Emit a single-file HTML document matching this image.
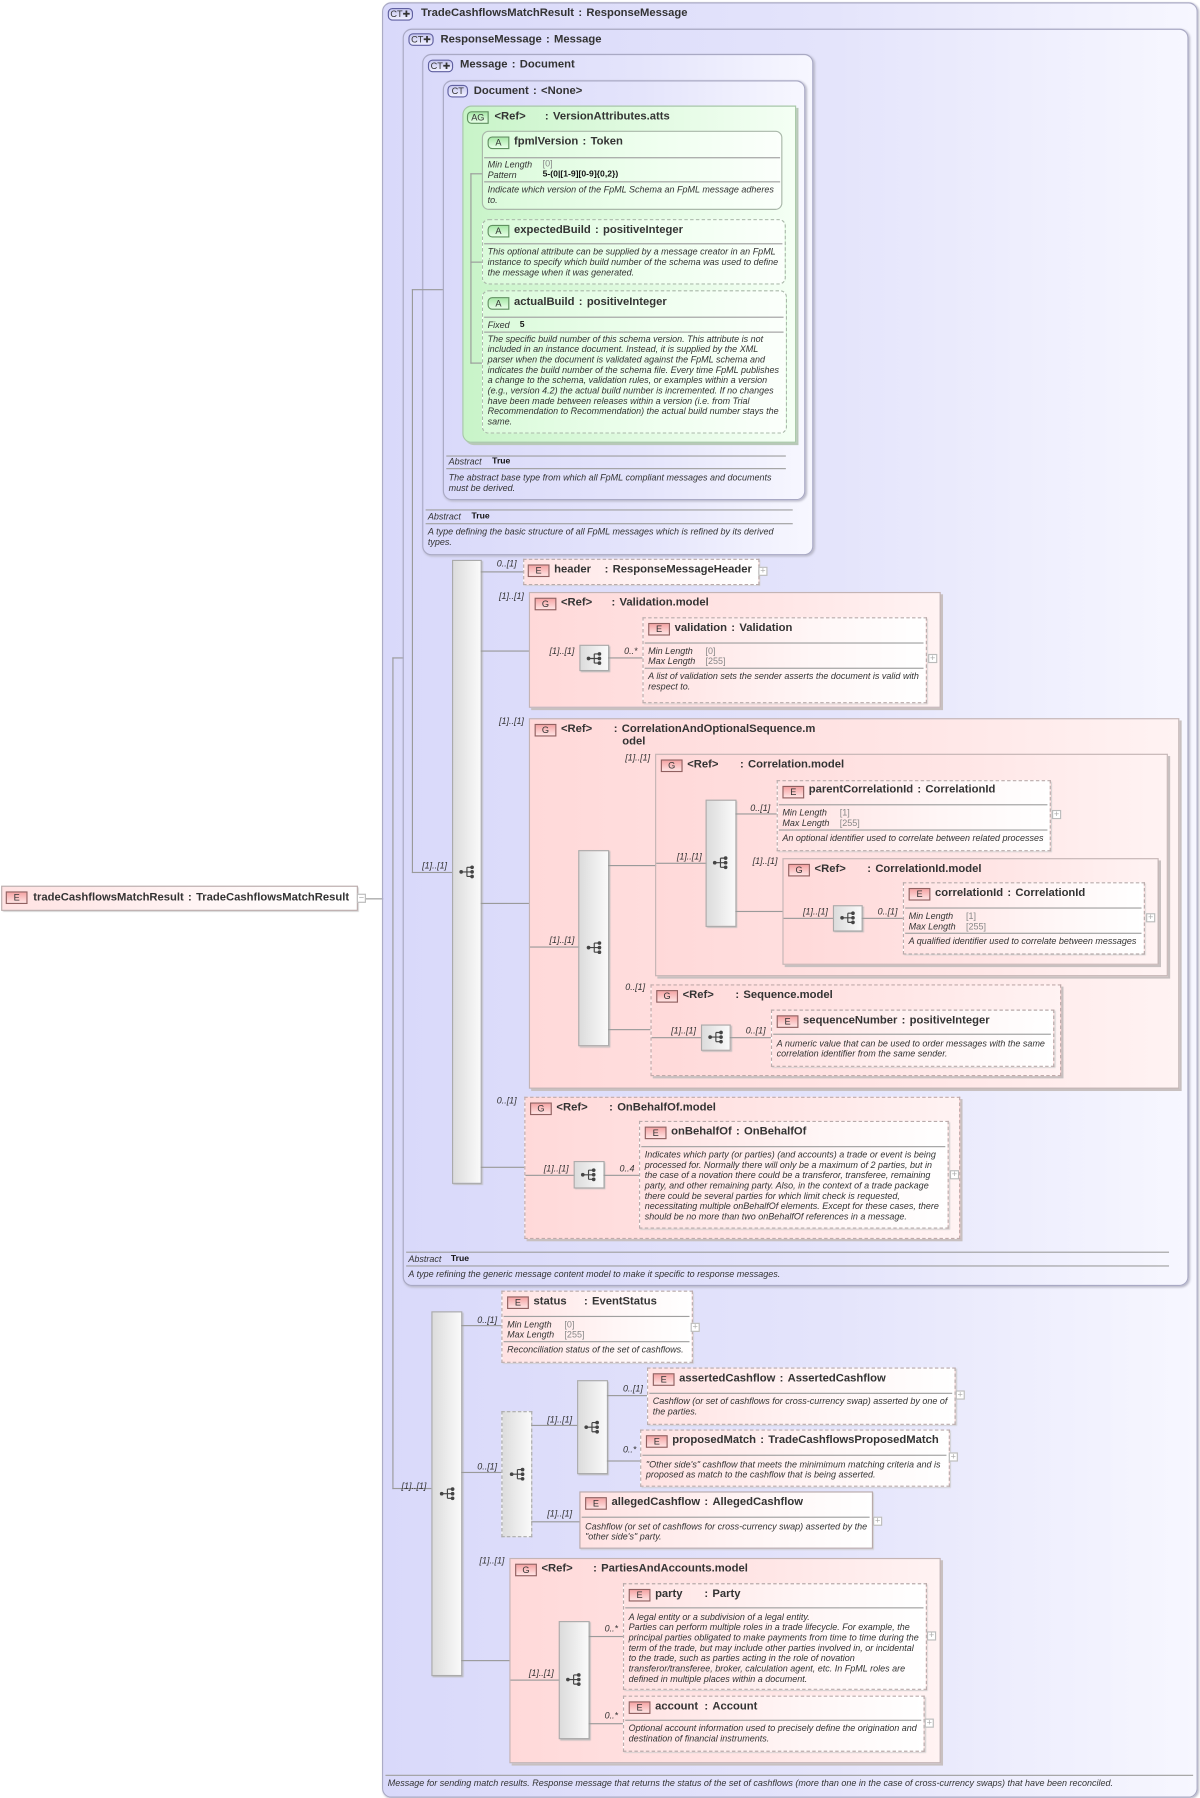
<!DOCTYPE html>
<html><head><meta charset="utf-8">
<style>
html,body{margin:0;padding:0;background:#fff;width:1200px;height:1798px;overflow:hidden}
#w{position:absolute;left:0;top:0;width:1046px;height:1567px;transform:scale(1.14723);transform-origin:0 0;font-family:"Liberation Sans",sans-serif;color:#333}
#w div{position:absolute;box-sizing:border-box}
.ct{border:1px solid #a9a9c4;border-radius:8px;background:linear-gradient(to right,#d9d9fa 0%,#e4e4fb 55%,#f7f7ff 100%);box-shadow:1px 1px 2px #b8b8c8}
.g{border:1px solid #c4b4b4;background:linear-gradient(to right,#ffd9d9,#ffe6e6 60%,#fff3f3);box-shadow:2px 2px 0 #c8c0c0}
.gd{border:1px dashed #c0aaaa;background:linear-gradient(to right,#ffd9d9,#ffe6e6 60%,#fff3f3);box-shadow:2px 2px 0 #c8c0c0}
.e{border:1px dashed #b9aaaa;background:linear-gradient(to right,#ffe2e2,#fff6f6 60%,#fff);box-shadow:1px 1px 1px #ccc}
.es{border:1px solid #b9aaaa;background:linear-gradient(to right,#ffe2e2,#fff6f6 60%,#fff);box-shadow:1px 1px 1px #ccc}
.ag{border:1px solid #a8c8a8;border-radius:8px 0 0 8px;background:linear-gradient(to right,#c8f4c8,#e4fbe4 60%,#f4fff4);box-shadow:2px 2px 0 #b8c8b8}
.a{border:1px solid #aab8aa;border-radius:6px;background:linear-gradient(to right,#dafada,#f0fff0 60%,#fbfffb)}
.ad{border:1px dashed #aab8aa;border-radius:6px;background:linear-gradient(to right,#dafada,#f0fff0 60%,#fbfffb)}
.t{font-size:9.8px;font-weight:bold;line-height:11px;white-space:nowrap;color:#333;word-spacing:1px}
.bd{font-size:8px;line-height:9px;text-align:center;font-weight:normal;border:1px solid #906060;background:linear-gradient(#f5a4a4,#ffe4e4);color:#333;width:19px;height:11px;word-spacing:0}
.bg{border:1px solid #609060;background:linear-gradient(#a8e8a8,#e8ffe8);border-radius:4px 0 0 4px}
.bc{border:1px solid #6060a0;background:linear-gradient(#c8c8f0,#f0f0ff);border-radius:4px;width:22px}
.s{font-size:7.85px;font-style:italic;line-height:9px;white-space:nowrap;color:#333}
.v{font-size:7.85px;line-height:9px;white-space:nowrap;color:#888}
.vb{font-size:7.5px;line-height:9px;white-space:nowrap;color:#111;font-weight:bold}
.l{font-size:7.8px;font-style:italic;white-space:nowrap;color:#333;line-height:8px}
.h{height:1px;background:#9a9a9a}
.vl{width:1px;background:#9a9a9a}
.sep{height:1px;background:#a0a0a0}
.sq{border:1px solid #aaa;background:linear-gradient(to right,#dcdcdc,#fafafa);box-shadow:1px 1px 1px #bbb}
.sqd{border:1px dashed #aaa;background:linear-gradient(to right,#dcdcdc,#fafafa)}
.pl{width:8px;height:8px;border:1px solid #bbb;background:#fff;font-size:8px;line-height:6px;text-align:center;color:#aaa}
</style></head><body>
<div id="w">
<svg width="0" height="0" style="position:absolute"><defs><g id="ic"><circle cx="2" cy="6" r="1.6" fill="#444"/><path d="M2 6H7M7 2V10M7 2H11M7 6H11M7 10H11" stroke="#444" stroke-width="1" fill="none"/><circle cx="11.5" cy="2" r="1.6" fill="#444"/><circle cx="11.5" cy="6" r="1.6" fill="#444"/><circle cx="11.5" cy="10" r="1.6" fill="#444"/></g></defs></svg>

<!-- left element -->
<div class="es" style="left:1px;top:772px;width:311px;height:22px"></div>
<div class="bd" style="left:5px;top:777px">E</div>
<div class="t" style="left:29px;top:777px">tradeCashflowsMatchResult&nbsp;:&nbsp;TradeCashflowsMatchResult</div>
<div class="pl" style="left:311px;top:779px">−</div>
<div class="h" style="left:319px;top:783px;width:24px"></div>

<!-- CT1 -->
<div class="ct" style="left:333px;top:2px;width:711px;height:1565px"></div>
<div class="bd bc" style="left:338px;top:7px">CT✚</div>
<div class="t" style="left:367px;top:6px">TradeCashflowsMatchResult&nbsp;:&nbsp;ResponseMessage</div>
<div class="sep" style="left:336px;top:1547px;width:704px"></div>
<div class="s" style="left:338px;top:1550px">Message for sending match results. Response message that returns the status of the set of cashflows (more than one in the case of cross-currency swaps) that have been reconciled.</div>

<div class="vl" style="left:342px;top:573px;height:725px"></div>
<div class="h" style="left:342px;top:573px;width:10px"></div>
<div class="h" style="left:342px;top:1297px;width:34px"></div>
<div class="l" style="left:350px;top:1292px">[1]..[1]</div>

<!-- CT2 -->
<div class="ct" style="left:351px;top:25px;width:685px;height:1096px"></div>
<div class="bd bc" style="left:356px;top:29px">CT✚</div>
<div class="t" style="left:384px;top:29px">ResponseMessage&nbsp;:&nbsp;Message</div>
<div class="vl" style="left:359px;top:252px;height:509px"></div>
<div class="h" style="left:359px;top:760px;width:35px"></div>
<div class="l" style="left:368px;top:751px">[1]..[1]</div>
<div class="sep" style="left:354px;top:1091px;width:665px"></div>
<div class="s" style="left:356px;top:1093px">Abstract</div>
<div class="vb" style="left:393px;top:1092px">True</div>
<div class="sep" style="left:354px;top:1103px;width:665px"></div>
<div class="s" style="left:356px;top:1106px">A type refining the generic message content model to make it specific to response messages.</div>

<!-- CT3 -->
<div class="ct" style="left:368px;top:47px;width:341px;height:437px"></div>
<div class="bd bc" style="left:373px;top:52px">CT✚</div>
<div class="t" style="left:401px;top:51px">Message&nbsp;:&nbsp;Document</div>
<div class="h" style="left:359px;top:252px;width:50px"></div>
<div class="sep" style="left:371px;top:444px;width:320px"></div>
<div class="s" style="left:373px;top:446px">Abstract</div>
<div class="vb" style="left:411px;top:445px">True</div>
<div class="sep" style="left:371px;top:456px;width:320px"></div>
<div class="s" style="left:373px;top:459px">A type defining the basic structure of all FpML messages which is refined by its derived<br>types.</div>

<!-- CT4 -->
<div class="ct" style="left:386px;top:70px;width:316px;height:366px"></div>
<div class="bd" style="left:390px;top:74px;width:18px;border:1px solid #6060a0;background:linear-gradient(#c8c8f0,#f0f0ff);border-radius:4px">CT</div>
<div class="t" style="left:413px;top:74px">Document&nbsp;:&nbsp;&lt;None&gt;</div>
<div class="sep" style="left:389px;top:397px;width:296px"></div>
<div class="s" style="left:391px;top:398px">Abstract</div>
<div class="vb" style="left:429px;top:397px">True</div>
<div class="sep" style="left:389px;top:408px;width:296px"></div>
<div class="s" style="left:391px;top:412px">The abstract base type from which all FpML compliant messages and documents<br>must be derived.</div>

<!-- AG -->
<div class="ag" style="left:403px;top:92px;width:291px;height:294px"></div>
<div class="bd bg" style="left:407px;top:97px">AG</div>
<div class="t" style="left:431px;top:96px">&lt;Ref&gt;</div>
<div class="t" style="left:475px;top:96px">:&nbsp;VersionAttributes.atts</div>
<div class="vl" style="left:410px;top:151px;height:166px"></div>
<div class="h" style="left:410px;top:151px;width:11px"></div>
<div class="h" style="left:410px;top:228px;width:11px"></div>
<div class="h" style="left:410px;top:316px;width:11px"></div>

<div class="a" style="left:420px;top:114px;width:262px;height:69px"></div>
<div class="bd bg" style="left:425px;top:119px">A</div>
<div class="t" style="left:448px;top:118px">fpmlVersion&nbsp;:&nbsp;Token</div>
<div class="sep" style="left:422px;top:137px;width:258px"></div>
<div class="s" style="left:425px;top:139px">Min Length<br>Pattern</div>
<div class="v" style="left:473px;top:138px">[0]</div>
<div class="vb" style="left:473px;top:147px">5-(0|[1-9][0-9]{0,2})</div>
<div class="sep" style="left:422px;top:158px;width:258px"></div>
<div class="s" style="left:425px;top:161px">Indicate which version of the FpML Schema an FpML message adheres<br>to.</div>

<div class="ad" style="left:420px;top:191px;width:265px;height:57px"></div>
<div class="bd bg" style="left:425px;top:196px">A</div>
<div class="t" style="left:448px;top:195px">expectedBuild&nbsp;:&nbsp;positiveInteger</div>
<div class="sep" style="left:422px;top:212px;width:260px"></div>
<div class="s" style="left:425px;top:215px">This optional attribute can be supplied by a message creator in an FpML<br>instance to specify which build number of the schema was used to define<br>the message when it was generated.</div>

<div class="ad" style="left:420px;top:253px;width:266px;height:125px"></div>
<div class="bd bg" style="left:425px;top:259px">A</div>
<div class="t" style="left:448px;top:258px">actualBuild&nbsp;:&nbsp;positiveInteger</div>
<div class="sep" style="left:422px;top:276px;width:261px"></div>
<div class="s" style="left:425px;top:279px">Fixed</div>
<div class="vb" style="left:453px;top:278px">5</div>
<div class="sep" style="left:422px;top:289px;width:261px"></div>
<div class="s" style="left:425px;top:291px">The specific build number of this schema version. This attribute is not<br>included in an instance document. Instead, it is supplied by the XML<br>parser when the document is validated against the FpML schema and<br>indicates the build number of the schema file. Every time FpML publishes<br>a change to the schema, validation rules, or examples within a version<br>(e.g., version 4.2) the actual build number is incremented. If no changes<br>have been made between releases within a version (i.e. from Trial<br>Recommendation to Recommendation) the actual build number stays the<br>same.</div>

<!-- Main sequence bar -->
<div class="sq" style="left:394px;top:488px;width:26px;height:544px"></div>
<svg style="position:absolute;left:400px;top:754px" width="14" height="12"><use href="#ic"/></svg>

<!-- header -->
<div class="h" style="left:419px;top:498px;width:38px"></div>
<div class="l" style="left:433px;top:488px">0..[1]</div>
<div class="e" style="left:456px;top:487px;width:206px;height:23px"></div>
<div class="bd" style="left:460px;top:492px">E</div>
<div class="t" style="left:483px;top:491px">header</div>
<div class="t" style="left:527px;top:491px">:&nbsp;ResponseMessageHeader</div>
<div class="pl" style="left:661px;top:494px">+</div>

<!-- Validation.model -->
<div class="h" style="left:419px;top:567px;width:86px"></div>
<div class="l" style="left:435px;top:516px">[1]..[1]</div>
<div class="g" style="left:461px;top:516px;width:359px;height:101px"></div>
<div class="bd" style="left:466px;top:521px">G</div>
<div class="t" style="left:489px;top:520px">&lt;Ref&gt;</div>
<div class="t" style="left:533px;top:520px">:&nbsp;Validation.model</div>
<div class="l" style="left:479px;top:564px">[1]..[1]</div>
<div class="sq" style="left:505px;top:562px;width:26px;height:23px"></div>
<svg style="position:absolute;left:511px;top:568px" width="14" height="12"><use href="#ic"/></svg>
<div class="h" style="left:530px;top:573px;width:31px"></div>
<div class="l" style="left:544px;top:564px">0..*</div>
<div class="e" style="left:560px;top:538px;width:248px;height:75px"></div>
<div class="bd" style="left:565px;top:543px">E</div>
<div class="t" style="left:588px;top:542px">validation&nbsp;:&nbsp;Validation</div>
<div class="sep" style="left:562px;top:560px;width:243px"></div>
<div class="s" style="left:565px;top:563px">Min Length<br>Max Length</div>
<div class="v" style="left:615px;top:563px">[0]<br>[255]</div>
<div class="sep" style="left:562px;top:582px;width:243px"></div>
<div class="s" style="left:565px;top:585px">A list of validation sets the sender asserts the document is valid with<br>respect to.</div>
<div class="pl" style="left:809px;top:570px">+</div>

<!-- CorrelationAndOptionalSequence.model -->
<div class="h" style="left:419px;top:787px;width:43px"></div>
<div class="l" style="left:435px;top:625px">[1]..[1]</div>
<div class="g" style="left:461px;top:626px;width:567px;height:323px"></div>
<div class="bd" style="left:466px;top:631px">G</div>
<div class="t" style="left:489px;top:630px">&lt;Ref&gt;</div>
<div class="t" style="left:535px;top:630px">:&nbsp;CorrelationAndOptionalSequence.m<br>&nbsp;&nbsp;odel</div>
<div class="h" style="left:462px;top:825px;width:43px"></div>
<div class="l" style="left:479px;top:816px">[1]..[1]</div>
<div class="sq" style="left:504px;top:741px;width:27px;height:171px"></div>
<svg style="position:absolute;left:511px;top:820px" width="14" height="12"><use href="#ic"/></svg>
<div class="h" style="left:530px;top:754px;width:42px"></div>
<div class="h" style="left:530px;top:897px;width:38px"></div>

<!-- Correlation.model -->
<div class="l" style="left:545px;top:657px">[1]..[1]</div>
<div class="g" style="left:571px;top:657px;width:447px;height:194px"></div>
<div class="bd" style="left:576px;top:662px">G</div>
<div class="t" style="left:599px;top:661px">&lt;Ref&gt;</div>
<div class="t" style="left:645px;top:661px">:&nbsp;Correlation.model</div>
<div class="h" style="left:572px;top:752px;width:44px"></div>
<div class="l" style="left:590px;top:743px">[1]..[1]</div>
<div class="sq" style="left:615px;top:697px;width:27px;height:111px"></div>
<svg style="position:absolute;left:621px;top:746px" width="14" height="12"><use href="#ic"/></svg>
<div class="h" style="left:641px;top:709px;width:37px"></div>
<div class="l" style="left:654px;top:701px">0..[1]</div>
<div class="e" style="left:677px;top:680px;width:239px;height:62px"></div>
<div class="bd" style="left:682px;top:685px">E</div>
<div class="t" style="left:705px;top:683px">parentCorrelationId&nbsp;:&nbsp;CorrelationId</div>
<div class="sep" style="left:679px;top:701px;width:234px"></div>
<div class="s" style="left:682px;top:704px">Min Length<br>Max Length</div>
<div class="v" style="left:732px;top:704px">[1]<br>[255]</div>
<div class="sep" style="left:679px;top:723px;width:234px"></div>
<div class="s" style="left:682px;top:726px">An optional identifier used to correlate between related processes</div>
<div class="pl" style="left:917px;top:706px">+</div>

<div class="h" style="left:641px;top:794px;width:42px"></div>
<div class="l" style="left:656px;top:747px">[1]..[1]</div>
<div class="g" style="left:682px;top:748px;width:328px;height:93px"></div>
<div class="bd" style="left:687px;top:753px">G</div>
<div class="t" style="left:710px;top:752px">&lt;Ref&gt;</div>
<div class="t" style="left:756px;top:752px">:&nbsp;CorrelationId.model</div>
<div class="h" style="left:683px;top:800px;width:44px"></div>
<div class="l" style="left:700px;top:791px">[1]..[1]</div>
<div class="sq" style="left:726px;top:789px;width:26px;height:23px"></div>
<svg style="position:absolute;left:732px;top:794px" width="14" height="12"><use href="#ic"/></svg>
<div class="h" style="left:751px;top:800px;width:37px"></div>
<div class="l" style="left:765px;top:791px">0..[1]</div>
<div class="e" style="left:787px;top:769px;width:211px;height:63px"></div>
<div class="bd" style="left:792px;top:774px">E</div>
<div class="t" style="left:815px;top:773px">correlationId&nbsp;:&nbsp;CorrelationId</div>
<div class="sep" style="left:789px;top:791px;width:206px"></div>
<div class="s" style="left:792px;top:794px">Min Length<br>Max Length</div>
<div class="v" style="left:842px;top:794px">[1]<br>[255]</div>
<div class="sep" style="left:789px;top:813px;width:206px"></div>
<div class="s" style="left:792px;top:816px">A qualified identifier used to correlate between messages</div>
<div class="pl" style="left:999px;top:796px">+</div>

<!-- Sequence.model -->
<div class="l" style="left:545px;top:857px">0..[1]</div>
<div class="gd" style="left:567px;top:858px;width:358px;height:80px"></div>
<div class="bd" style="left:572px;top:863px">G</div>
<div class="t" style="left:595px;top:862px">&lt;Ref&gt;</div>
<div class="t" style="left:641px;top:862px">:&nbsp;Sequence.model</div>
<div class="h" style="left:568px;top:904px;width:44px"></div>
<div class="l" style="left:585px;top:895px">[1]..[1]</div>
<div class="sq" style="left:611px;top:893px;width:26px;height:23px"></div>
<svg style="position:absolute;left:617px;top:898px" width="14" height="12"><use href="#ic"/></svg>
<div class="h" style="left:636px;top:904px;width:37px"></div>
<div class="l" style="left:650px;top:895px">0..[1]</div>
<div class="e" style="left:672px;top:880px;width:247px;height:50px"></div>
<div class="bd" style="left:677px;top:885px">E</div>
<div class="t" style="left:700px;top:884px">sequenceNumber&nbsp;:&nbsp;positiveInteger</div>
<div class="sep" style="left:674px;top:901px;width:242px"></div>
<div class="s" style="left:677px;top:905px">A numeric value that can be used to order messages with the same<br>correlation identifier from the same sender.</div>

<!-- OnBehalfOf.model -->
<div class="h" style="left:419px;top:1017px;width:39px"></div>
<div class="l" style="left:433px;top:956px">0..[1]</div>
<div class="gd" style="left:457px;top:956px;width:380px;height:124px"></div>
<div class="bd" style="left:462px;top:961px">G</div>
<div class="t" style="left:485px;top:960px">&lt;Ref&gt;</div>
<div class="t" style="left:531px;top:960px">:&nbsp;OnBehalfOf.model</div>
<div class="h" style="left:458px;top:1024px;width:43px"></div>
<div class="l" style="left:474px;top:1015px">[1]..[1]</div>
<div class="sq" style="left:500px;top:1012px;width:27px;height:24px"></div>
<svg style="position:absolute;left:506px;top:1018px" width="14" height="12"><use href="#ic"/></svg>
<div class="h" style="left:526px;top:1024px;width:32px"></div>
<div class="l" style="left:540px;top:1015px">0..4</div>
<div class="e" style="left:557px;top:977px;width:270px;height:94px"></div>
<div class="bd" style="left:562px;top:982px">E</div>
<div class="t" style="left:585px;top:981px">onBehalfOf&nbsp;:&nbsp;OnBehalfOf</div>
<div class="sep" style="left:559px;top:999px;width:265px"></div>
<div class="s" style="left:562px;top:1002px">Indicates which party (or parties) (and accounts) a trade or event is being<br>processed for. Normally there will only be a maximum of 2 parties, but in<br>the case of a novation there could be a transferor, transferee, remaining<br>party, and other remaining party. Also, in the context of a trade package<br>there could be several parties for which limit check is requested,<br>necessitating multiple onBehalfOf elements. Except for these cases, there<br>should be no more than two onBehalfOf references in a message.</div>
<div class="pl" style="left:828px;top:1020px">+</div>

<!-- Lower sequence -->
<div class="sq" style="left:376px;top:1143px;width:27px;height:318px"></div>
<svg style="position:absolute;left:383px;top:1296px" width="14" height="12"><use href="#ic"/></svg>

<div class="h" style="left:402px;top:1155px;width:36px"></div>
<div class="l" style="left:416px;top:1147px">0..[1]</div>
<div class="e" style="left:437px;top:1125px;width:167px;height:63px"></div>
<div class="bd" style="left:442px;top:1130px">E</div>
<div class="t" style="left:465px;top:1129px">status</div>
<div class="t" style="left:509px;top:1129px">:&nbsp;EventStatus</div>
<div class="sep" style="left:439px;top:1147px;width:162px"></div>
<div class="s" style="left:442px;top:1150px">Min Length<br>Max Length</div>
<div class="v" style="left:492px;top:1150px">[0]<br>[255]</div>
<div class="sep" style="left:439px;top:1169px;width:162px"></div>
<div class="s" style="left:442px;top:1172px">Reconciliation status of the set of cashflows.</div>
<div class="pl" style="left:602px;top:1153px">+</div>

<div class="h" style="left:402px;top:1283px;width:36px"></div>
<div class="l" style="left:416px;top:1275px">0..[1]</div>
<div class="sqd" style="left:437px;top:1230px;width:27px;height:110px"></div>
<svg style="position:absolute;left:444px;top:1279px" width="14" height="12"><use href="#ic"/></svg>
<div class="h" style="left:463px;top:1242px;width:41px"></div>
<div class="l" style="left:477px;top:1234px">[1]..[1]</div>
<div class="sq" style="left:503px;top:1203px;width:27px;height:82px"></div>
<svg style="position:absolute;left:509px;top:1238px" width="14" height="12"><use href="#ic"/></svg>
<div class="h" style="left:529px;top:1216px;width:36px"></div>
<div class="l" style="left:543px;top:1207px">0..[1]</div>
<div class="e" style="left:564px;top:1192px;width:269px;height:50px"></div>
<div class="bd" style="left:569px;top:1197px">E</div>
<div class="t" style="left:592px;top:1196px">assertedCashflow&nbsp;:&nbsp;AssertedCashflow</div>
<div class="sep" style="left:566px;top:1214px;width:264px"></div>
<div class="s" style="left:569px;top:1217px">Cashflow (or set of cashflows for cross-currency swap) asserted by one of<br>the parties.</div>
<div class="pl" style="left:833px;top:1212px">+</div>

<div class="h" style="left:529px;top:1273px;width:30px"></div>
<div class="l" style="left:543px;top:1260px">0..*</div>
<div class="e" style="left:558px;top:1246px;width:270px;height:50px"></div>
<div class="bd" style="left:563px;top:1251px">E</div>
<div class="t" style="left:586px;top:1250px">proposedMatch&nbsp;:&nbsp;TradeCashflowsProposedMatch</div>
<div class="sep" style="left:560px;top:1268px;width:265px"></div>
<div class="s" style="left:563px;top:1272px">"Other side's" cashflow that meets the minimimum matching criteria and is<br>proposed as match to the cashflow that is being asserted.</div>
<div class="pl" style="left:827px;top:1266px">+</div>

<div class="h" style="left:463px;top:1326px;width:43px"></div>
<div class="l" style="left:477px;top:1316px">[1]..[1]</div>
<div class="es" style="left:505px;top:1300px;width:256px;height:50px"></div>
<div class="bd" style="left:510px;top:1305px">E</div>
<div class="t" style="left:533px;top:1304px">allegedCashflow&nbsp;:&nbsp;AllegedCashflow</div>
<div class="sep" style="left:507px;top:1322px;width:251px"></div>
<div class="s" style="left:510px;top:1326px">Cashflow (or set of cashflows for cross-currency swap) asserted by the<br>"other side's" party.</div>
<div class="pl" style="left:761px;top:1322px">+</div>

<!-- PartiesAndAccounts.model -->
<div class="h" style="left:402px;top:1447px;width:43px"></div>
<div class="l" style="left:418px;top:1357px">[1]..[1]</div>
<div class="g" style="left:444px;top:1358px;width:376px;height:179px"></div>
<div class="bd" style="left:449px;top:1363px">G</div>
<div class="t" style="left:472px;top:1362px">&lt;Ref&gt;</div>
<div class="t" style="left:517px;top:1362px">:&nbsp;PartiesAndAccounts.model</div>
<div class="h" style="left:445px;top:1464px;width:43px"></div>
<div class="l" style="left:461px;top:1455px">[1]..[1]</div>
<div class="sq" style="left:487px;top:1413px;width:27px;height:103px"></div>
<svg style="position:absolute;left:493px;top:1458px" width="14" height="12"><use href="#ic"/></svg>
<div class="h" style="left:513px;top:1426px;width:31px"></div>
<div class="l" style="left:527px;top:1416px">0..*</div>
<div class="e" style="left:543px;top:1380px;width:265px;height:93px"></div>
<div class="bd" style="left:548px;top:1385px">E</div>
<div class="t" style="left:571px;top:1384px">party</div>
<div class="t" style="left:614px;top:1384px">:&nbsp;Party</div>
<div class="sep" style="left:545px;top:1401px;width:260px"></div>
<div class="s" style="left:548px;top:1405px">A legal entity or a subdivision of a legal entity.<br>Parties can perform multiple roles in a trade lifecycle. For example, the<br>principal parties obligated to make payments from time to time during the<br>term of the trade, but may include other parties involved in, or incidental<br>to the trade, such as parties acting in the role of novation<br>transferor/transferee, broker, calculation agent, etc. In FpML roles are<br>defined in multiple places within a document.</div>
<div class="pl" style="left:808px;top:1422px">+</div>

<div class="h" style="left:513px;top:1502px;width:31px"></div>
<div class="l" style="left:527px;top:1492px">0..*</div>
<div class="e" style="left:543px;top:1478px;width:263px;height:49px"></div>
<div class="bd" style="left:548px;top:1483px">E</div>
<div class="t" style="left:571px;top:1482px">account</div>
<div class="t" style="left:614px;top:1482px">:&nbsp;Account</div>
<div class="sep" style="left:545px;top:1499px;width:258px"></div>
<div class="s" style="left:548px;top:1502px">Optional account information used to precisely define the origination and<br>destination of financial instruments.</div>
<div class="pl" style="left:806px;top:1498px">+</div>
</div>
</body></html>
